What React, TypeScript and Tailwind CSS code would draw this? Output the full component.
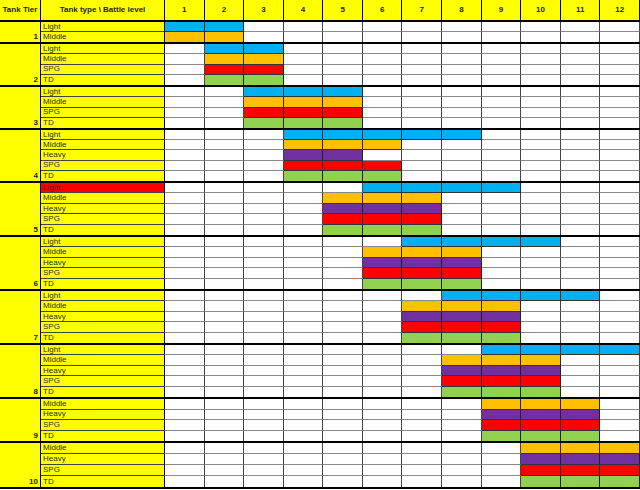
import React from "react";

type Kind = "light" | "middle" | "heavy" | "spg" | "td";

type Row = { label: string; kind: Kind; from: number; to: number; hot?: boolean };
type Tier = { tier: number; h: string; rows: Row[] };

const fill: Record<Kind, string> = {
  light: "bg-[#00b0f0]",
  middle: "bg-[#ffc000]",
  heavy: "bg-[#7030a0]",
  spg: "bg-[#ff0000]",
  td: "bg-[#92d050]",
};

const five = (l: [number, number], m: [number, number], hv: [number, number], s: [number, number], t: [number, number], hot = false): Row[] => [
  { label: "Light", kind: "light", from: l[0], to: l[1], hot },
  { label: "Middle", kind: "middle", from: m[0], to: m[1] },
  { label: "Heavy", kind: "heavy", from: hv[0], to: hv[1] },
  { label: "SPG", kind: "spg", from: s[0], to: s[1] },
  { label: "TD", kind: "td", from: t[0], to: t[1] },
];

const four = (a: number, b: number, withLight: boolean): Row[] =>
  withLight
    ? [
        { label: "Light", kind: "light", from: a, to: b },
        { label: "Middle", kind: "middle", from: a, to: b },
        { label: "SPG", kind: "spg", from: a, to: b },
        { label: "TD", kind: "td", from: a, to: b },
      ]
    : [
        { label: "Middle", kind: "middle", from: a, to: b },
        { label: "Heavy", kind: "heavy", from: a, to: b },
        { label: "SPG", kind: "spg", from: a, to: b },
        { label: "TD", kind: "td", from: a, to: b },
      ];

const tiers: Tier[] = [
  {
    tier: 1,
    h: "h-[22px]",
    rows: [
      { label: "Light", kind: "light", from: 1, to: 2 },
      { label: "Middle", kind: "middle", from: 1, to: 2 },
    ],
  },
  { tier: 2, h: "h-[43px]", rows: four(2, 3, true) },
  { tier: 3, h: "h-[43px]", rows: four(3, 5, true) },
  { tier: 4, h: "h-[53px]", rows: five([4, 8], [4, 6], [4, 5], [4, 6], [4, 6]) },
  { tier: 5, h: "h-[54px]", rows: five([6, 9], [5, 7], [5, 7], [5, 7], [5, 7], true) },
  { tier: 6, h: "h-[54px]", rows: five([7, 10], [6, 8], [6, 8], [6, 8], [6, 8]) },
  { tier: 7, h: "h-[54px]", rows: five([8, 11], [7, 9], [7, 9], [7, 9], [7, 9]) },
  { tier: 8, h: "h-[54px]", rows: five([9, 12], [8, 10], [8, 10], [8, 10], [8, 10]) },
  { tier: 9, h: "h-[44px]", rows: four(9, 11, false) },
  { tier: 10, h: "h-[46px]", rows: four(10, 12, false) },
];

const levels = Array.from({ length: 12 }, (_, i) => i + 1);

function TypeRow({ row, last }: { row: Row; last: boolean }) {
  return (
    <div className="grid min-h-0 flex-1 grid-cols-[124px_repeat(12,minmax(0,1fr))]">
      <div
        className={`flex items-center overflow-hidden border-r border-black pl-[2px] text-[8px] leading-none ${
          row.hot ? "bg-[#ff0000] text-[#5a1a00]" : "bg-[#ffff00] text-[#2a2a2a]"
        } ${last ? "" : "border-b border-b-[#444]"}`}
      >
        {row.label}
      </div>
      {levels.map((lv) => {
        const on = lv >= row.from && lv <= row.to;
        return (
          <div
            key={lv}
            className={`${on ? `${fill[row.kind]} border-r-[#222]` : "bg-white border-r-[#444]"} border-r ${
              last ? "" : on ? "border-b border-b-[#333]" : "border-b border-b-[#8a8a8a]"
            }`}
          />
        );
      })}
    </div>
  );
}

function TierBlock({ t }: { t: Tier }) {
  return (
    <div className={`flex ${t.h} border-b-2 border-black`}>
      <div className="flex w-[41px] shrink-0 flex-col justify-end border-r border-black bg-[#ffff00]">
        <span className="pb-[1px] pr-[2px] text-right text-[8px] font-bold leading-[9px] text-[#222]">
          {t.tier}
        </span>
      </div>
      <div className="flex min-w-0 flex-1 flex-col">
        {t.rows.map((r, i) => (
          <TypeRow key={r.label} row={r} last={i === t.rows.length - 1} />
        ))}
      </div>
    </div>
  );
}

export default function App() {
  return (
    <div className="h-[490px] w-[640px] overflow-hidden bg-white font-['Liberation_Sans',Arial,sans-serif]">
      <div className="grid h-[22px] grid-cols-[41px_124px_repeat(12,minmax(0,1fr))] border-b-2 border-black bg-[#ffff00] text-[8px] font-bold text-[#222]">
        <div className="flex items-center justify-center whitespace-nowrap border-r border-black">Tank Tier</div>
        <div className="flex items-center justify-center whitespace-nowrap border-r border-black">
          Tank type \ Battle level
        </div>
        {levels.map((lv) => (
          <div key={lv} className="flex items-center justify-center border-r border-black">
            {lv}
          </div>
        ))}
      </div>
      {tiers.map((t) => (
        <TierBlock key={t.tier} t={t} />
      ))}
    </div>
  );
}
